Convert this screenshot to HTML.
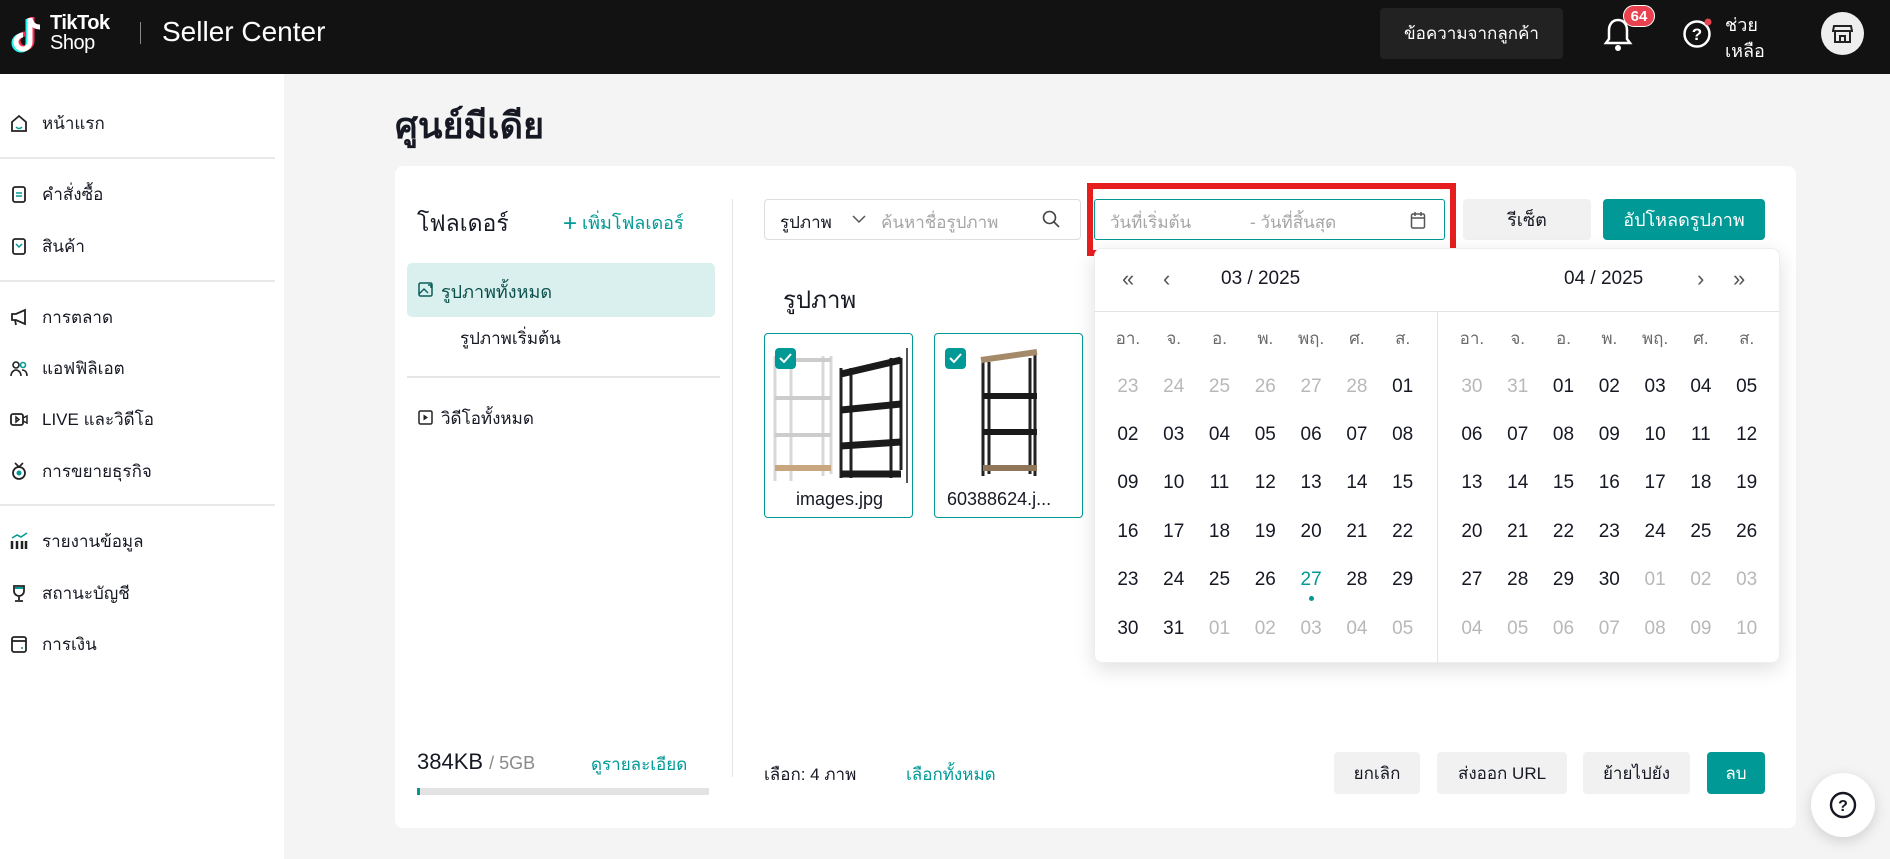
<!DOCTYPE html>
<html><head><meta charset="utf-8"><style>
*{box-sizing:border-box;margin:0;padding:0}
body{width:1890px;height:859px;position:relative;overflow:hidden;background:#f4f4f4;font-family:"Liberation Sans","DejaVu Sans",sans-serif;color:#161823}
.a{position:absolute}
.hdr{left:0;top:0;width:1890px;height:74px;background:#121212}
.side{left:0;top:74px;width:284px;height:785px;background:#fff}
.nav{position:absolute;left:10px;font-size:17px;display:flex;align-items:center;gap:14px;height:24px;margin-top:-12px}
.nav svg{width:18px;height:18px}
.div{position:absolute;left:0;width:275px;height:2px;background:#e8e8e8}
.card{left:395px;top:166px;width:1401px;height:662px;background:#fff;border-radius:8px}
.btn{position:absolute;top:752px;height:42px;border-radius:4px;background:#f1f1f1;font-size:17px;display:flex;align-items:center;justify-content:center}
.grid{position:absolute;display:grid;grid-template-columns:repeat(7,45.8px);grid-auto-rows:48.4px;font-size:19px;align-items:center;justify-items:center}
.g{color:#b8b8b8}
.w{color:#6b6b6b;font-size:17px}
.t{color:#009995;position:relative}
.t:after{content:"";position:absolute;left:50%;top:27px;width:5px;height:5px;margin-left:-2.5px;border-radius:50%;background:#009995}
</style></head><body>
<div class="a hdr"></div>
<svg class="a" style="left:10px;top:14px" width="36" height="44" viewBox="0 0 36 44"><path d="M20 4v24a7 7 0 1 1-7-7" fill="none" stroke="#25f4ee" stroke-width="5" transform="translate(-2,1)"/><path d="M20 4v24a7 7 0 1 1-7-7" fill="none" stroke="#fe2c55" stroke-width="5" transform="translate(2,-1)"/><path d="M20 4v24a7 7 0 1 1-7-7M20 4c1 6 5 9 10 9" fill="none" stroke="#fff" stroke-width="5"/></svg>
<div class="a" style="left:50px;top:13px;color:#fff;font-size:20px;font-weight:bold;line-height:20px;letter-spacing:-0.5px">TikTok<br><span style="font-weight:normal">Shop</span></div>
<div class="a" style="left:140px;top:22px;width:1px;height:22px;background:#888"></div>
<div class="a" style="left:162px;top:16px;color:#fff;font-size:28px">Seller Center</div>
<div class="a" style="left:1380px;top:8px;width:183px;height:51px;background:#222;border-radius:4px;color:#fff;font-size:17px;display:flex;align-items:center;justify-content:center">ข้อความจากลูกค้า</div>
<svg class="a" style="left:1602px;top:17px" width="32" height="36" viewBox="0 0 32 36"><path d="M16 3c-6 0-9 5-9 10v9l-3 4h24l-3-4v-9c0-5-3-10-9-10z" fill="none" stroke="#fff" stroke-width="2.5"/><circle cx="16" cy="31" r="3" fill="#fff"/></svg>
<div class="a" style="left:1623px;top:5px;width:32px;height:22px;background:#e8414f;border-radius:11px;border:1.5px solid #fff;color:#fff;font-size:15px;font-weight:bold;display:flex;align-items:center;justify-content:center">64</div>
<svg class="a" style="left:1682px;top:18px" width="32" height="32" viewBox="0 0 32 32"><circle cx="15" cy="16" r="12.5" fill="none" stroke="#fff" stroke-width="2.5"/><text x="15" y="22" font-size="17" font-weight="bold" fill="#fff" text-anchor="middle" font-family="Liberation Sans">?</text><circle cx="26" cy="4" r="3.5" fill="#e8414f"/></svg>
<div class="a" style="left:1725px;top:12px;color:#fff;font-size:18px;line-height:26px">ช่วย<br>เหลือ</div>
<div class="a" style="left:1821px;top:12px;width:43px;height:43px;border-radius:50%;background:#eee"></div>
<svg class="a" style="left:1832px;top:23px" width="21" height="21" viewBox="0 0 21 21"><path d="M3 8v11h15V8M2 3h17l1 5H1zM8 19v-6h5v6" fill="none" stroke="#222" stroke-width="2"/></svg>

<div class="a side"></div>
<div class="nav" style="top:123px"><svg viewBox="0 0 18 18"><path d="M2 8l7-6 7 6v9H2z" fill="none" stroke="#222" stroke-width="1.8"/><path d="M6 13q3 3 6 0" stroke="#009995" fill="none" stroke-width="1.5"/></svg>หน้าแรก</div>
<div class="div" style="top:157px"></div>
<div class="nav" style="top:194px"><svg viewBox="0 0 18 18"><rect x="3" y="2" width="12" height="15" rx="2" fill="none" stroke="#222" stroke-width="1.8"/><path d="M6 8h6M6 11h6" stroke="#009995" stroke-width="1.5"/></svg>คำสั่งซื้อ</div>
<div class="nav" style="top:246px"><svg viewBox="0 0 18 18"><rect x="3" y="2" width="12" height="15" rx="2" fill="none" stroke="#222" stroke-width="1.8"/><path d="M6 7l3 3 3-3" stroke="#009995" fill="none" stroke-width="1.5"/></svg>สินค้า</div>
<div class="div" style="top:280px"></div>
<div class="nav" style="top:317px"><svg viewBox="0 0 18 18"><path d="M2 6h4l9-4v14l-9-4H2zM5 12l1 5" fill="none" stroke="#222" stroke-width="1.8"/></svg>การตลาด</div>
<div class="nav" style="top:368px"><svg viewBox="0 0 18 18"><circle cx="6" cy="6" r="3" fill="none" stroke="#222" stroke-width="1.6"/><circle cx="13" cy="6" r="2.5" fill="none" stroke="#009995" stroke-width="1.6"/><path d="M1 17c0-4 3-6 5-6s5 2 5 6M12 11c3 0 5 2 5 6" fill="none" stroke="#222" stroke-width="1.6"/></svg>แอฟฟิลิเอต</div>
<div class="nav" style="top:419px"><svg viewBox="0 0 18 18"><rect x="1" y="4" width="12" height="11" rx="2" fill="none" stroke="#222" stroke-width="1.8"/><path d="M13 8l4-2v7l-4-2M6 7v5l3-2.5z" fill="none" stroke="#222" stroke-width="1.5"/></svg>LIVE และวิดีโอ</div>
<div class="nav" style="top:471px"><svg viewBox="0 0 18 18"><circle cx="9" cy="11" r="6" fill="none" stroke="#222" stroke-width="1.8"/><path d="M5 1l4 4 4-4" fill="none" stroke="#222" stroke-width="1.6"/><circle cx="9" cy="11" r="2.5" fill="#009995"/></svg>การขยายธุรกิจ</div>
<div class="div" style="top:504px"></div>
<div class="nav" style="top:541px"><svg viewBox="0 0 18 18"><path d="M2 9v8M7 9v8M12 9v8M16 9v8" stroke="#222" stroke-width="2.5"/><path d="M2 6l5-3 4 2 6-4" stroke="#009995" fill="none" stroke-width="1.6"/></svg>รายงานข้อมูล</div>
<div class="nav" style="top:593px"><svg viewBox="0 0 18 18"><path d="M4 2h10v5a5 5 0 0 1-10 0zM9 12v4M5 17h8" fill="none" stroke="#222" stroke-width="1.8"/><path d="M5 4h8" stroke="#009995" stroke-width="2"/></svg>สถานะบัญชี</div>
<div class="nav" style="top:644px"><svg viewBox="0 0 18 18"><rect x="2" y="2" width="14" height="15" rx="2" fill="none" stroke="#222" stroke-width="1.8"/><path d="M2 6h14" stroke="#222" stroke-width="1.8"/><circle cx="12" cy="13" r="1" fill="#009995"/></svg>การเงิน</div>

<div class="a" style="left:395px;top:97px;font-size:36px;font-weight:bold">ศูนย์มีเดีย</div>
<div class="a card"></div>
<div class="a" style="left:417px;top:206px;font-size:23px">โฟลเดอร์</div>
<div class="a" style="left:563px;top:208px;font-size:18px;color:#009995"><span style="font-size:24px;vertical-align:-2px">+</span> เพิ่มโฟลเดอร์</div>
<div class="a" style="left:407px;top:263px;width:308px;height:54px;background:#d9f0ee;border-radius:5px"></div>
<svg class="a" style="left:418px;top:282px" width="15" height="15" viewBox="0 0 15 15"><rect x="1" y="1" width="13" height="13" rx="1.5" fill="none" stroke="#0a5d5a" stroke-width="1.5"/><path d="M1 12l5-5 4 4M10 3h3v3" fill="none" stroke="#0a5d5a" stroke-width="1.4"/></svg>
<div class="a" style="left:441px;top:277px;font-size:18px;color:#0a4e4b">รูปภาพทั้งหมด</div>
<div class="a" style="left:460px;top:325px;font-size:17px">รูปภาพเริ่มต้น</div>
<div class="a" style="left:407px;top:376px;width:313px;height:2px;background:#e5e5e5"></div>
<svg class="a" style="left:418px;top:410px" width="15" height="15" viewBox="0 0 15 15"><rect x="1" y="1" width="13" height="13" rx="1.5" fill="none" stroke="#222" stroke-width="1.5"/><path d="M5.5 4.5v6l4.5-3z" fill="#222"/></svg>
<div class="a" style="left:441px;top:405px;font-size:17px">วิดีโอทั้งหมด</div>
<div class="a" style="left:732px;top:199px;width:1px;height:578px;background:#e5e5e5"></div>
<div class="a" style="left:417px;top:749px;font-size:22px">384KB <span style="color:#8a8a8a;font-size:18px">/ 5GB</span></div>
<div class="a" style="left:591px;top:751px;font-size:17px;color:#009995">ดูรายละเอียด</div>
<div class="a" style="left:417px;top:788px;width:292px;height:7px;background:#e3e3e3"></div>
<div class="a" style="left:417px;top:788px;width:3px;height:7px;background:#009995"></div>

<div class="a" style="left:764px;top:199px;width:317px;height:41px;border:1px solid #ddd;border-radius:4px"></div>
<div class="a" style="left:780px;top:209px;font-size:17px">รูปภาพ</div>
<svg class="a" style="left:852px;top:214px" width="14" height="10" viewBox="0 0 14 10"><path d="M1 2l6 6 6-6" fill="none" stroke="#555" stroke-width="1.5"/></svg>
<div class="a" style="left:881px;top:209px;font-size:17px;color:#a5a5a5">ค้นหาชื่อรูปภาพ</div>
<svg class="a" style="left:1042px;top:210px" width="18" height="18" viewBox="0 0 18 18"><circle cx="7.5" cy="7.5" r="6" fill="none" stroke="#444" stroke-width="1.6"/><path d="M12 12l5 5" stroke="#444" stroke-width="1.6"/></svg>
<div class="a" style="left:1087px;top:183px;width:369px;height:73px;border:6px solid #e61e1e"></div>
<div class="a" style="left:1094px;top:199px;width:351px;height:41px;border:1px solid #009995;border-radius:3px"></div>
<div class="a" style="left:1110px;top:209px;font-size:17px;color:#a5a5a5">วันที่เริ่มต้น</div>
<div class="a" style="left:1250px;top:209px;font-size:17px;color:#a5a5a5">- วันที่สิ้นสุด</div>
<svg class="a" style="left:1410px;top:211px" width="16" height="18" viewBox="0 0 16 18"><rect x="1.5" y="3" width="13" height="14" rx="1.5" fill="none" stroke="#555" stroke-width="1.5"/><path d="M1.5 7h13M5 1v4M11 1v4" stroke="#555" stroke-width="1.5"/></svg>
<div class="a" style="left:1463px;top:199px;width:128px;height:41px;background:#f1f1f1;border-radius:4px;font-size:18px;display:flex;align-items:center;justify-content:center">รีเซ็ต</div>
<div class="a" style="left:1603px;top:199px;width:162px;height:41px;background:#009995;border-radius:4px;font-size:18px;color:#fff;display:flex;align-items:center;justify-content:center">อัปโหลดรูปภาพ</div>

<div class="a" style="left:783px;top:280px;font-size:24px">รูปภาพ</div>
<div class="a" style="left:764px;top:333px;width:149px;height:185px;border:1px solid #009995;border-radius:4px;overflow:hidden">
<svg class="a" style="left:4px;top:14px" width="140" height="135" viewBox="0 0 140 135"><g stroke="#d8d8d8" stroke-width="3" fill="none"><path d="M6 8v125M22 8v125M54 8v120M62 8v118"/></g><g stroke="#ccc" stroke-width="4"><path d="M6 12h56M6 50h56M6 87h56"/></g><path d="M6 120h56" stroke="#c9a77e" stroke-width="6"/><g stroke="#222" stroke-width="3" fill="none"><path d="M72 20v110M82 20v110M122 10v120M132 10v112"/></g><g stroke="#1a1a1a" stroke-width="7"><path d="M72 26l60-14M72 62l60-6M72 98l60-4M72 126h60"/></g><path d="M138 0v135" stroke="#555" stroke-width="2"/></svg>
<div class="a" style="left:10px;top:14px;width:21px;height:21px;background:#009995;border-radius:4px"></div>
<svg class="a" style="left:14px;top:19px" width="13" height="10" viewBox="0 0 13 10"><path d="M1 5l4 4 7-8" fill="none" stroke="#fff" stroke-width="2"/></svg>
<div class="a" style="left:0;top:155px;width:149px;text-align:center;font-size:18px">images.jpg</div>
</div>
<div class="a" style="left:934px;top:333px;width:149px;height:185px;border:1px solid #009995;border-radius:4px;overflow:hidden">
<svg class="a" style="left:40px;top:14px" width="70" height="130" viewBox="0 0 70 130"><g stroke="#222" stroke-width="3" fill="none"><path d="M8 10v118M60 6v122M14 14v112M55 10v116"/></g><path d="M6 12l56-8" stroke="#a58a6a" stroke-width="6"/><g stroke="#1a1a1a" stroke-width="6"><path d="M8 48h54M8 84h54"/></g><path d="M8 120h54" stroke="#8f7658" stroke-width="6"/></svg>
<div class="a" style="left:10px;top:14px;width:21px;height:21px;background:#009995;border-radius:4px"></div>
<svg class="a" style="left:14px;top:19px" width="13" height="10" viewBox="0 0 13 10"><path d="M1 5l4 4 7-8" fill="none" stroke="#fff" stroke-width="2"/></svg>
<div class="a" style="left:12px;top:155px;font-size:18px">60388624.j...</div>
</div>

<div class="a" style="left:764px;top:761px;font-size:17px">เลือก: 4 ภาพ</div>
<div class="a" style="left:906px;top:761px;font-size:17px;color:#009995">เลือกทั้งหมด</div>
<div class="btn" style="left:1334px;width:86px">ยกเลิก</div>
<div class="btn" style="left:1437px;width:130px">ส่งออก URL</div>
<div class="btn" style="left:1583px;width:107px">ย้ายไปยัง</div>
<div class="btn" style="left:1707px;width:58px;background:#009995;color:#fff">ลบ</div>

<div class="a" style="left:1094px;top:248px;width:686px;height:415px;background:#fff;border-radius:8px;box-shadow:0 6px 20px rgba(0,0,0,0.13);border:1px solid #eee"></div>
<div class="a" style="left:1094px;top:311px;width:686px;height:1px;background:#e3e3e3"></div>
<div class="a" style="left:1437px;top:312px;width:1px;height:351px;background:#e3e3e3"></div>
<div class="a" style="left:1122px;top:266px;font-size:22px;color:#555">«</div>
<div class="a" style="left:1163px;top:266px;font-size:22px;color:#555">‹</div>
<div class="a" style="left:1221px;top:268px;font-size:19px">03 / 2025</div>
<div class="a" style="left:1564px;top:268px;font-size:19px">04 / 2025</div>
<div class="a" style="left:1697px;top:266px;font-size:22px;color:#555">›</div>
<div class="a" style="left:1733px;top:266px;font-size:22px;color:#555">»</div>
<div class="grid" style="left:1105px;top:314px">
<span class="w">อา.</span><span class="w">จ.</span><span class="w">อ.</span><span class="w">พ.</span><span class="w">พฤ.</span><span class="w">ศ.</span><span class="w">ส.</span>
<span class="g">23</span><span class="g">24</span><span class="g">25</span><span class="g">26</span><span class="g">27</span><span class="g">28</span><span>01</span>
<span>02</span><span>03</span><span>04</span><span>05</span><span>06</span><span>07</span><span>08</span>
<span>09</span><span>10</span><span>11</span><span>12</span><span>13</span><span>14</span><span>15</span>
<span>16</span><span>17</span><span>18</span><span>19</span><span>20</span><span>21</span><span>22</span>
<span>23</span><span>24</span><span>25</span><span>26</span><span class="t">27</span><span>28</span><span>29</span>
<span>30</span><span>31</span><span class="g">01</span><span class="g">02</span><span class="g">03</span><span class="g">04</span><span class="g">05</span>
</div>
<div class="grid" style="left:1449px;top:314px">
<span class="w">อา.</span><span class="w">จ.</span><span class="w">อ.</span><span class="w">พ.</span><span class="w">พฤ.</span><span class="w">ศ.</span><span class="w">ส.</span>
<span class="g">30</span><span class="g">31</span><span>01</span><span>02</span><span>03</span><span>04</span><span>05</span>
<span>06</span><span>07</span><span>08</span><span>09</span><span>10</span><span>11</span><span>12</span>
<span>13</span><span>14</span><span>15</span><span>16</span><span>17</span><span>18</span><span>19</span>
<span>20</span><span>21</span><span>22</span><span>23</span><span>24</span><span>25</span><span>26</span>
<span>27</span><span>28</span><span>29</span><span>30</span><span class="g">01</span><span class="g">02</span><span class="g">03</span>
<span class="g">04</span><span class="g">05</span><span class="g">06</span><span class="g">07</span><span class="g">08</span><span class="g">09</span><span class="g">10</span>
</div>

<div class="a" style="left:1811px;top:773px;width:64px;height:64px;border-radius:50%;background:#fff;box-shadow:0 4px 14px rgba(0,0,0,0.15)"></div>
<svg class="a" style="left:1829px;top:791px" width="28" height="28" viewBox="0 0 28 28"><circle cx="14" cy="14" r="12" fill="none" stroke="#161823" stroke-width="2.4"/><text x="14" y="20" font-size="16" font-weight="bold" text-anchor="middle" fill="#161823" font-family="Liberation Sans">?</text></svg>
</body></html>
